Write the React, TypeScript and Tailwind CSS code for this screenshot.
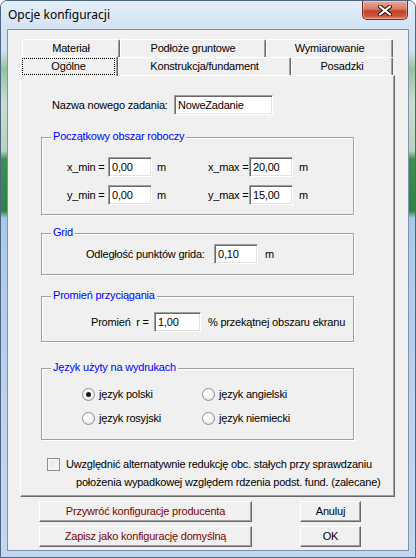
import React from 'react'

const sunken =
  'bg-white border border-t-[#a0a0a0] border-l-[#a0a0a0] border-r-white border-b-white shadow-[inset_1px_1px_0_#696969,inset_-1px_-1px_0_#e3e3e3] h-[20px] pl-[3px] flex items-center leading-none'

const raised =
  'bg-[#f0f0f0] border border-t-white border-l-white border-r-[#696969] border-b-[#696969] shadow-[inset_-1px_-1px_0_#a0a0a0]'

function Field({ value, w }: { value: string; w: string }) {
  return <div className={`${sunken} ${w}`}>{value}</div>
}

function Tab({ label, w, selected }: { label: string; w: string; selected?: boolean }) {
  if (selected) {
    return (
      <div className={`${w} h-[20px] -mb-[1px] relative z-10 bg-[#f0f0f0] border-t border-l border-white border-r border-r-[#696969] rounded-tl-[2px] shadow-[inset_-1px_0_0_#a0a0a0] pt-[1px] pl-[1px] pr-[2px]`}>
        <div className="h-[17px] border border-dotted border-black flex items-center justify-center">{label}</div>
      </div>
    )
  }
  return (
    <div className={`${w} h-[18px] bg-[#f0f0f0] border-t border-l border-white border-r border-r-[#696969] rounded-tl-[2px] rounded-tr-[2px] shadow-[inset_-1px_0_0_#a0a0a0] flex items-center justify-center`}>
      {label}
    </div>
  )
}

function Group({ title, h, mt, children }: { title: string; h: string; mt: string; children: React.ReactNode }) {
  return (
    <div className={`relative ml-[20px] w-[313px] ${h} ${mt} border border-[#a0a0a0] shadow-[1px_1px_0_#fff,inset_1px_1px_0_#fff]`}>
      <span className="absolute left-[9px] -top-[8px] px-[2px] bg-[#f0f0f0] text-[#0000ff] leading-[13px]">{title}</span>
      {children}
    </div>
  )
}

function Radio({ label, checked }: { label: string; checked?: boolean }) {
  return (
    <div className="w-[120px] flex items-center h-[16px]">
      <span className="w-[13px] h-[13px] rounded-full border border-[#8e8f8f] bg-[radial-gradient(circle_at_45%_40%,#ffffff_35%,#e2e2e2_75%,#cfcfcf)] flex items-center justify-center">
        {checked && <span className="w-[5px] h-[5px] rounded-full bg-[#1a1a1a]" />}
      </span>
      <span className="ml-[4px]">{label}</span>
    </div>
  )
}

export default function App() {
  return (
    <div className="w-[416px] h-[558px] overflow-hidden rounded-t-[7px] border border-[#4d6782] bg-[linear-gradient(to_bottom,#dde9f6_0px,#cfe0f1_50px,#93c39e_68px,#c9ddd0_100px,#b8d3c0_150px,#3f8f56_158px,#2f8049_210px,#a9c8e8_217px,#bdd3ee_400px,#c3d8f0_558px)] font-['Liberation_Sans',Arial,sans-serif] text-[11px] tracking-[-0.2px] whitespace-nowrap text-black">
      {/* Title bar */}
      <div className="h-[28px] flex items-start bg-[linear-gradient(to_bottom,#e4eef9,#d3e3f3)]">
        <span className="pl-[7px] pt-[6px] font-['Noto_Sans',sans-serif] text-[12px] tracking-normal leading-[16px]">Opcje konfiguracji</span>
        <div className="ml-auto mr-[7px] w-[46px] h-[19px] rounded-b-[5px] border border-t-0 border-[#6b2a1f] bg-[linear-gradient(to_bottom,#e9a89b_0%,#d77a66_45%,#c2412a_55%,#d2563c_85%,#e4876d_100%)] shadow-[inset_0_0_0_1px_rgba(255,255,255,0.35)] flex items-center justify-center">
          <svg width="14" height="11" viewBox="0 0 14 11">
            <path d="M2 1.5 L12 9.5 M12 1.5 L2 9.5" stroke="#3a1710" strokeWidth="4.2" strokeLinecap="round" />
            <path d="M2 1.5 L12 9.5 M12 1.5 L2 9.5" stroke="#ffffff" strokeWidth="2.2" strokeLinecap="round" />
          </svg>
        </div>
      </div>

      {/* Client area */}
      <div className="ml-[6px] w-[402px] h-[522px] border border-[#7d93ab] bg-[#f0f0f0]">
        <div className="pl-[12px] pt-[9px]">
          {/* Tabs */}
          <div className="flex items-end h-[18px] pl-[2px]">
            <Tab label="Materiał" w="w-[98px]" />
            <Tab label="Podłoże gruntowe" w="w-[146px]" />
            <Tab label="Wymiarowanie" w="w-[127px]" />
          </div>
          <div className="flex items-end h-[18px]">
            <Tab label="Ogólne" w="w-[98px]" selected />
            <Tab label="Konstrukcja/fundament" w="w-[173px]" />
            <Tab label="Posadzki" w="w-[102px]" />
          </div>

          {/* Panel */}
          <div className={`${raised} w-[375px] h-[422px]`}>
            <div className="mt-[19px] flex items-center h-[20px]">
              <span className="w-[153px] pl-[31px]">Nazwa nowego zadania:</span>
              <Field value="NoweZadanie" w="w-[99px]" />
            </div>

            <Group title="Początkowy obszar roboczy" h="h-[78px]" mt="mt-[22px]">
              <div className="pt-[19px] pl-[25px]">
                <div className="flex items-center h-[20px]">
                  <span className="w-[41px]">x_min =</span>
                  <Field value="0,00" w="w-[44px]" />
                  <span className="w-[56px] pl-[5px]">m</span>
                  <span className="w-[41px]">x_max =</span>
                  <Field value="20,00" w="w-[44px]" />
                  <span className="pl-[6px]">m</span>
                </div>
                <div className="flex items-center h-[20px] mt-[8px]">
                  <span className="w-[41px]">y_min =</span>
                  <Field value="0,00" w="w-[44px]" />
                  <span className="w-[56px] pl-[5px]">m</span>
                  <span className="w-[41px]">y_max =</span>
                  <Field value="15,00" w="w-[44px]" />
                  <span className="pl-[6px]">m</span>
                </div>
              </div>
            </Group>

            <Group title="Grid" h="h-[42px]" mt="mt-[18px]">
              <div className="pt-[10px] pl-[44px] flex items-center h-[30px]">
                <span className="w-[128px]">Odległość punktów grida:</span>
                <Field value="0,10" w="w-[44px]" />
                <span className="pl-[7px]">m</span>
              </div>
            </Group>

            <Group title="Promień przyciągania" h="h-[46px]" mt="mt-[21px]">
              <div className="pt-[15px] pl-[49px] flex items-center h-[35px]">
                <span className="w-[63px] whitespace-pre">Promień  r =</span>
                <Field value="1,00" w="w-[47px]" />
                <span className="pl-[7px]">% przekątnej obszaru ekranu</span>
              </div>
            </Group>

            <Group title="Język użyty na wydrukach" h="h-[72px]" mt="mt-[26px]">
              <div className="pt-[17px] pl-[40px]">
                <div className="flex">
                  <Radio label="język polski" checked />
                  <Radio label="język angielski" />
                </div>
                <div className="flex mt-[8px]">
                  <Radio label="język rosyjski" />
                  <Radio label="język niemiecki" />
                </div>
              </div>
            </Group>

            <div className="mt-[15px] pl-[26px] leading-[18px]">
              <div className="flex items-center">
                <span className="w-[13px] h-[13px] border border-[#8e8f8f] bg-[linear-gradient(135deg,#dcdcdc,#ffffff)] shadow-[inset_0_0_0_2px_#f4f4f4]" />
                <span className="ml-[6px]">Uwzględnić alternatywnie redukcję obc. stałych przy sprawdzaniu</span>
              </div>
              <div className="pl-[29px]">położenia wypadkowej względem rdzenia podst. fund. (zalecane)</div>
            </div>
          </div>

          {/* Buttons */}
          <div className="flex mt-[4px] pl-[19px]">
            <div className="flex flex-col gap-[4px] w-[213px]">
              <div className={`${raised} h-[21px] flex items-center justify-center text-[#800000]`}>Przywróć konfiguracje producenta</div>
              <div className={`${raised} h-[21px] flex items-center justify-center text-[#800000]`}>Zapisz jako konfigurację domyślną</div>
            </div>
            <div className="flex flex-col gap-[4px] w-[61px] ml-[48px]">
              <div className={`${raised} h-[21px] flex items-center justify-center`}>Anuluj</div>
              <div className={`${raised} h-[21px] flex items-center justify-center`}>OK</div>
            </div>
          </div>
        </div>
      </div>
    </div>
  )
}
